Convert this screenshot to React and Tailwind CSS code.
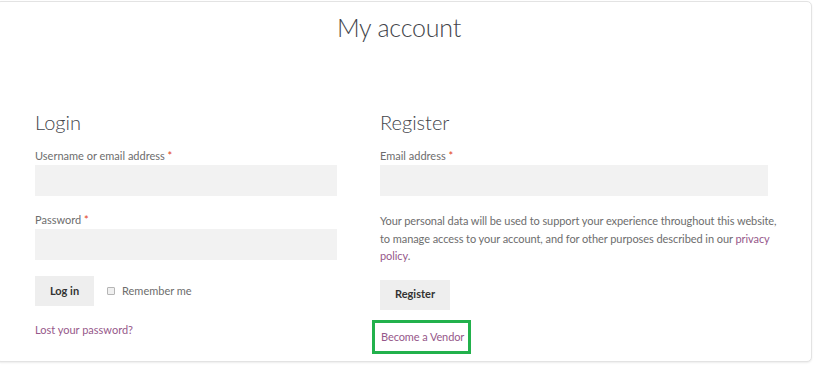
export default function App() {
  const font = { fontFamily: "Lato, 'Open Sans', sans-serif" };
  return (
    <div className="w-[820px] h-[368px] bg-white overflow-hidden" style={font}>
      <div className="ml-[-4px] mt-[1px] w-[816px] h-[361px] border border-[#e3e3e3] rounded-[5px] shadow-[0_1px_2px_rgba(0,0,0,0.08)] bg-white flex flex-col">
        <h1 className="text-center text-[25px] font-light text-[#43454b] leading-none pt-[13px] pr-[10px] tracking-[-0.2px]">
          My account
        </h1>
        <div className="flex pt-[72px] pl-[38px]">
          <div className="w-[302px] flex flex-col">
            <h2 className="text-[20px] font-light text-[#43454b] leading-none">Login</h2>
            <label className="text-[11px] text-[#6d6d6d] mt-[18px] leading-none">
              Username or email address <span className="text-[#e2401c]">*</span>
            </label>
            <div className="mt-[4px] h-[31px] bg-[#f2f2f2]" />
            <label className="text-[11px] text-[#6d6d6d] mt-[18px] leading-none">
              Password <span className="text-[#e2401c]">*</span>
            </label>
            <div className="mt-[4px] h-[31px] bg-[#f2f2f2]" />
            <div className="flex items-center mt-[16px]">
              <div className="w-[59px] h-[30px] bg-[#eeeeee] flex items-center justify-center text-[11px] font-bold text-[#333333]">
                Log in
              </div>
              <span className="ml-[13px] w-[8px] h-[8px] border border-[#b5b5b5] rounded-[1px] bg-[#f0f0f0]" />
              <span className="ml-[7px] text-[11px] text-[#6d6d6d]">Remember me</span>
            </div>
            <a className="mt-[18px] text-[11px] text-[#96588a] leading-none">Lost your password?</a>
          </div>
          <div className="ml-[43px] w-[388px] flex flex-col">
            <h2 className="text-[20px] font-light text-[#43454b] leading-none">Register</h2>
            <label className="text-[11px] text-[#6d6d6d] mt-[18px] leading-none">
              Email address <span className="text-[#e2401c]">*</span>
            </label>
            <div className="mt-[4px] h-[31px] bg-[#f2f2f2]" />
            <p className="mt-[16px] text-[11px] leading-[17.5px] text-[#6d6d6d] w-[402px] tracking-[-0.07px]">
              Your personal data will be used to support your experience throughout this website, to manage access to your account, and for other purposes described in our <a className="text-[#96588a]">privacy policy</a>.
            </p>
            <div className="mt-[15px] w-[70px] h-[30px] bg-[#eeeeee] flex items-center justify-center text-[11px] font-bold text-[#333333]">
              Register
            </div>
            <div className="mt-[10px] ml-[-8px] w-[99px] h-[34px] border-[3px] border-[#22b14c] flex items-center pl-[6px]">
              <a className="text-[11px] text-[#96588a] leading-none tracking-[-0.1px]">Become a Vendor</a>
            </div>
          </div>
        </div>
      </div>
    </div>
  );
}
